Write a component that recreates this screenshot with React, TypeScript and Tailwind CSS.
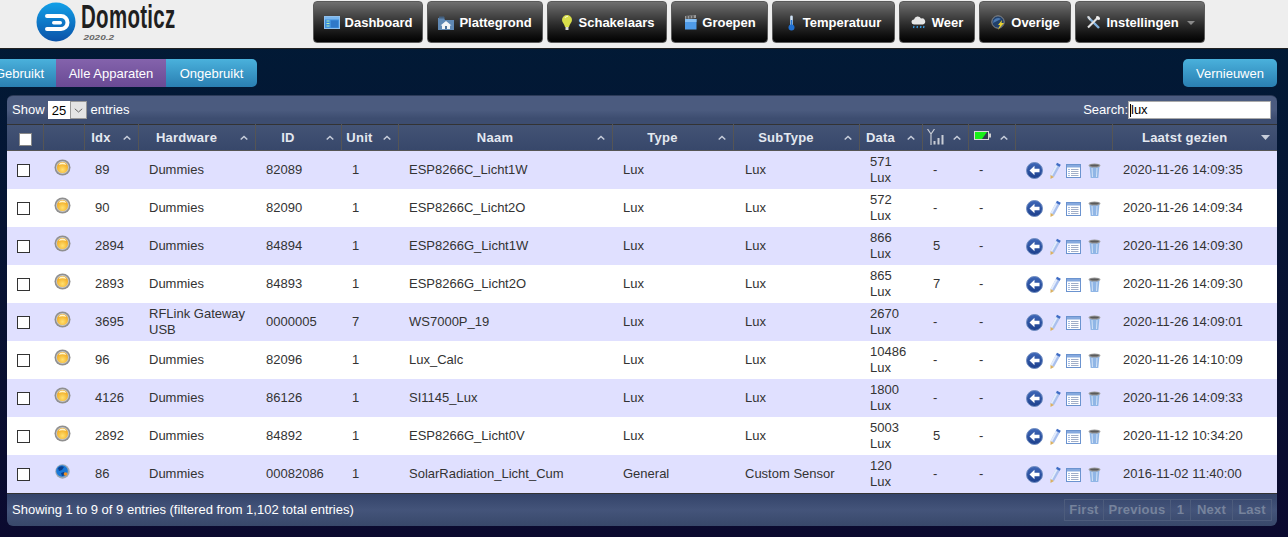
const font = "font-['Liberation_Sans',Arial,sans-serif]";

const rows = [
  { idx: '89', hw: 'Dummies', id: '82089', unit: '1', name: 'ESP8266C_Licht1W', type: 'Lux', sub: 'Lux', data: '571', signal: '-', seen: '2020-11-26 14:09:35' },
  { idx: '90', hw: 'Dummies', id: '82090', unit: '1', name: 'ESP8266C_Licht2O', type: 'Lux', sub: 'Lux', data: '572', signal: '-', seen: '2020-11-26 14:09:34' },
  { idx: '2894', hw: 'Dummies', id: '84894', unit: '1', name: 'ESP8266G_Licht1W', type: 'Lux', sub: 'Lux', data: '866', signal: '5', seen: '2020-11-26 14:09:30' },
  { idx: '2893', hw: 'Dummies', id: '84893', unit: '1', name: 'ESP8266G_Licht2O', type: 'Lux', sub: 'Lux', data: '865', signal: '7', seen: '2020-11-26 14:09:30' },
  { idx: '3695', hw: 'RFLink Gateway USB', id: '0000005', unit: '7', name: 'WS7000P_19', type: 'Lux', sub: 'Lux', data: '2670', signal: '-', seen: '2020-11-26 14:09:01' },
  { idx: '96', hw: 'Dummies', id: '82096', unit: '1', name: 'Lux_Calc', type: 'Lux', sub: 'Lux', data: '10486', signal: '-', seen: '2020-11-26 14:10:09' },
  { idx: '4126', hw: 'Dummies', id: '86126', unit: '1', name: 'SI1145_Lux', type: 'Lux', sub: 'Lux', data: '1800', signal: '-', seen: '2020-11-26 14:09:33' },
  { idx: '2892', hw: 'Dummies', id: '84892', unit: '1', name: 'ESP8266G_Licht0V', type: 'Lux', sub: 'Lux', data: '5003', signal: '5', seen: '2020-11-12 10:34:20' },
  { idx: '86', hw: 'Dummies', id: '00082086', unit: '1', name: 'SolarRadiation_Licht_Cum', type: 'General', sub: 'Custom Sensor', data: '120', signal: '-', seen: '2016-11-02 11:40:00', globe: true },
];

const DashboardIcon = () => (
  <svg width="16" height="13" viewBox="0 0 16 13">
    <rect x="0.500" y="0.500" width="15" height="12" fill="#3f8fdc" stroke="#8fc0ee" />
    <rect x="1" y="1" width="14" height="2.500" fill="#79b6ee" />
    <path d="M2.500 5h3M2.500 7.500h3M2.500 10h3" stroke="#b8f0b0" strokeWidth="1.200" />
    <rect x="7" y="4.500" width="7" height="7" fill="#2f78c8" />
  </svg>
);

const PlanIcon = () => (
  <svg width="16" height="14" viewBox="0 0 16 14">
    <path d="M0 2h6l1 2h9v10H0z" fill="#5f88b4" />
    <path d="M1 0.500h5l1 2H1z" fill="#44607f" />
    <path d="M8 5l5.500 4.500H12V13H4V9.500H2.500z" fill="#f2f4f7" />
    <rect x="7" y="10" width="2" height="3" fill="#4c6f96" />
  </svg>
);

const BulbIcon = () => (
  <svg width="12" height="16" viewBox="0 0 12 16">
    <path d="M6 0a5 5 0 0 1 5 5c0 2.500-2.500 4-3 7H4c-.5-3-3-4.500-3-7a5 5 0 0 1 5-5z" fill="#d8de4a" />
    <path d="M4 3a3 3 0 0 1 3-1.500" stroke="#f6f8c0" strokeWidth="1.200" fill="none" />
    <rect x="4.500" y="12" width="3" height="3" fill="#d9d9d9" />
  </svg>
);

const ClapperIcon = () => (
  <svg width="13" height="15" viewBox="0 0 13 15">
    <path d="M1 1l11-1v3l-11 1z" fill="#9a9a9a" />
    <path d="M3 1v3M6 1v2.500M9 .5v3" stroke="#333" strokeWidth="1" />
    <rect x="1" y="4" width="11.500" height="10.500" fill="#4f9be8" />
    <rect x="1" y="4" width="11.500" height="3" fill="#88c0f4" />
  </svg>
);

const ThermoIcon = () => (
  <svg width="9" height="16" viewBox="0 0 9 16">
    <rect x="3.200" y="0.500" width="2.600" height="11" rx="1.300" fill="#cfe2f5" />
    <rect x="3.700" y="5" width="1.600" height="7" fill="#2478d8" />
    <circle cx="4.500" cy="12.500" r="3" fill="#1f6fd0" />
  </svg>
);

const CloudIcon = () => (
  <svg width="15" height="15" viewBox="0 0 15 15">
    <path d="M3 9.500a2.500 2.500 0 0 1 0-5 3.800 3.800 0 0 1 7-1 3 3 0 0 1 2 6z" fill="#e6e6e6" />
    <path d="M3 11l-.5 2M6.500 11l-.5 2M10 11l-.5 2M13 11l-.5 2" stroke="#3aa0e8" strokeWidth="1.300" />
  </svg>
);

const GaugeIcon = () => (
  <svg width="15" height="15" viewBox="0 0 15 15">
    <circle cx="7" cy="7" r="6.200" fill="#21406a" stroke="#8a8a8a" />
    <path d="M2 8a5 5 0 0 1 8-4z" fill="#4a78b0" />
    <path d="M11 5L7 10l2 0-2 5 6-7h-2.500z" fill="#e8d030" />
  </svg>
);

const ToolsIcon = () => (
  <svg width="15" height="15" viewBox="0 0 15 15">
    <path d="M2 2l11 11" stroke="#7fb0de" strokeWidth="2.400" />
    <path d="M1 1.500L3 1l2 3-1.500 1.500z" fill="#d8d8d8" />
    <path d="M12 2.500L2 12.500" stroke="#e2e2e2" strokeWidth="2.200" />
    <path d="M10.500 1a3 3 0 0 1 3.500 3.500l-2 .5-2-2z" fill="#f0f0f0" />
  </svg>
);

const navItems = [
  { label: 'Dashboard', icon: <DashboardIcon />, w: 'w-[110px]', iw: 'w-4' },
  { label: 'Plattegrond', icon: <PlanIcon />, w: 'w-[116px]', iw: 'w-4' },
  { label: 'Schakelaars', icon: <BulbIcon />, w: 'w-[120px]', iw: 'w-[14px]' },
  { label: 'Groepen', icon: <ClapperIcon />, w: 'w-[97px]', iw: 'w-[14px]' },
  { label: 'Temperatuur', icon: <ThermoIcon />, w: 'w-[123px]', iw: 'w-3' },
  { label: 'Weer', icon: <CloudIcon />, w: 'w-[76px]', iw: 'w-4' },
  { label: 'Overige', icon: <GaugeIcon />, w: 'w-[92px]', iw: 'w-4' },
  { label: 'Instellingen', icon: <ToolsIcon />, w: 'w-[130px]', iw: 'w-4', caret: true },
];

const Logo = () => (
  <svg width="40" height="40" viewBox="0 0 40 40">
    <defs>
      <linearGradient id="logoFill" x1="0" y1="0" x2="0" y2="1">
        <stop offset="0" stopColor="#12a0e8" />
        <stop offset="1" stopColor="#0a52a8" />
      </linearGradient>
    </defs>
    <circle cx="20" cy="20" r="19.500" fill="url(#logoFill)" />
    <path d="M11 12h14a8.500 8.500 0 0 1 0 17H11a2 2 0 0 1 0-4h14a4.500 4.500 0 0 0 0-9H11a2 2 0 0 1 0-4z" fill="#fff" />
    <rect x="16" y="19" width="10" height="3.500" rx="1.700" fill="#fff" />
  </svg>
);

const SortArrow = ({ down }: { down?: boolean }) => (
  <span className="absolute right-[7px] top-[10px] flex">
    {down ? (
      <svg width="9" height="6" viewBox="0 0 9 6"><path d="M0 0h9L4.500 5z" fill="#c8cedb" /></svg>
    ) : (
      <svg width="8" height="6" viewBox="0 0 8 6"><path d="M.7 4.500L4 1.500l3.300 3" fill="none" stroke="#c8cedb" strokeWidth="1.500" /></svg>
    )}
  </span>
);

const SignalIcon = () => (
  <svg width="17" height="16" viewBox="0 0 17 16">
    <path d="M4 4v12M0.500 0l3.500 5L7.500 0" fill="none" stroke="#c9cdd6" strokeWidth="1.200" />
    <rect x="6.500" y="12" width="2" height="3.500" fill="#c9cdd6" />
    <rect x="10.500" y="9" width="2" height="6.500" fill="#c9cdd6" />
    <rect x="14.500" y="6" width="2" height="9.500" fill="#c9cdd6" />
  </svg>
);

const BatteryIcon = () => (
  <svg width="17" height="9" viewBox="0 0 17 9">
    <rect x="0.500" y="0.500" width="14" height="8" fill="#30394f" stroke="#d8d8d8" />
    <path d="M1 1h12L8 8H1z" fill="#18f018" />
    <rect x="15" y="2.500" width="2" height="4" fill="#d0d0d0" />
  </svg>
);

const LuxIcon = () => (
  <svg width="17" height="17" viewBox="0 0 17 17">
    <defs>
      <radialGradient id="luxFill" cx="0.5" cy="0.7" r="0.6">
        <stop offset="0" stopColor="#ffe070" />
        <stop offset="1" stopColor="#f2aa20" />
      </radialGradient>
    </defs>
    <circle cx="8.500" cy="8.500" r="8" fill="#8f8f8f" />
    <circle cx="8.500" cy="8.500" r="6.500" fill="#c8c8c8" />
    <circle cx="8.500" cy="8.500" r="5.500" fill="url(#luxFill)" />
    <path d="M4.500 6a4.500 4.500 0 0 1 8 0q-4-1.500-8 0z" fill="#fff6d0" />
  </svg>
);

const GlobeIcon = () => (
  <svg width="15" height="15" viewBox="0 0 15 15">
    <circle cx="7.500" cy="7.500" r="7.200" fill="#9aa6b2" />
    <circle cx="7" cy="7" r="5.800" fill="#1878d8" />
    <path d="M3 4q3-3 6-1l-2 3-3 1zM6 9l3-1 1 3-3 1z" fill="#0b3f8c" />
    <circle cx="10.500" cy="10" r="1.800" fill="#f09020" />
  </svg>
);

const BackIcon = () => (
  <svg width="17" height="17" viewBox="0 0 17 17">
    <defs>
      <linearGradient id="backFill" x1="0" y1="0" x2="0" y2="1">
        <stop offset="0" stopColor="#3f68b8" />
        <stop offset="1" stopColor="#1c3f8c" />
      </linearGradient>
    </defs>
    <circle cx="8.500" cy="8.500" r="8" fill="url(#backFill)" stroke="#6f8cc0" />
    <path d="M3.500 8.500L8.500 3.800v2.900H13.500v3.600H8.500v2.900z" fill="#fff" />
  </svg>
);

const PencilIcon = () => (
  <svg width="12" height="17" viewBox="0 0 12 17">
    <path d="M7.500 1.500l4 2L5 15l-3.500-2z" fill="#a9c0ee" />
    <path d="M7.500 1.500l1.800.9L3 14l-1.500-1z" fill="#e4ecfb" />
    <path d="M8 .800l3.800 2-1.200 2L7 3z" fill="#3f6cc4" />
    <path d="M1.500 13L5 15l-3.500 2z" fill="#d9b060" />
  </svg>
);

const ListIcon = () => (
  <svg width="15" height="14" viewBox="0 0 15 14">
    <rect x="0.500" y="0.500" width="14" height="13" fill="#fff" stroke="#6b93cf" />
    <rect x="1" y="1" width="13" height="2.500" fill="#86a9de" />
    <path d="M2.500 5.500h1M2.500 7.500h1M2.500 9.500h1M2.500 11.500h1" stroke="#4a7ac4" />
    <path d="M5 5.500h7.500M5 7.500h7.500M5 9.500h7.500M5 11.500h7.500" stroke="#a0aec8" />
  </svg>
);

const TrashIcon = () => (
  <svg width="13" height="16" viewBox="0 0 13 16">
    <path d="M1.500 3h10l-1.200 12H2.700z" fill="#90b6e6" />
    <path d="M4 5l.5 9M9 5l-.5 9" stroke="#d2e2f6" />
    <ellipse cx="6.500" cy="2.500" rx="6" ry="2" fill="#9a9a9a" />
    <ellipse cx="6.500" cy="2.500" rx="4.300" ry="1" fill="#5a5a5a" />
  </svg>
);

const headers = [
  { label: 'Idx' },
  { label: 'Hardware' },
  { label: 'ID' },
  { label: 'Unit' },
  { label: 'Naam' },
  { label: 'Type' },
  { label: 'SubType' },
  { label: 'Data' },
];

const NavButton = ({ item }: { item: (typeof navItems)[number] }) => (
  <button className={`${item.w} h-[42px] flex items-center justify-center gap-[5px] rounded-[4px] border border-[#5a5a5a] bg-linear-to-b from-[#707070] to-[#030303] pt-px text-[13px] font-bold text-white`}>
    <span className={`flex ${item.iw} justify-center`}>{item.icon}</span>
    <span>{item.label}</span>
    {item.caret && <span className="ml-[3px] mt-px h-0 w-0 border-x-4 border-t-4 border-x-transparent border-t-[#8a8a8a]" />}
  </button>
);

export default function App() {
  return (
    <div className={`${font} flex h-[537px] w-[1288px] flex-col overflow-hidden bg-linear-to-b from-[#001b36] to-[#0b0a2f] text-[13px]`}>
      <header className="flex h-[49px] shrink-0 border-b border-[#222] bg-[#eeeeee]">
        <div className="flex w-[313px] shrink-0 pl-[36px] pt-[2px]">
          <Logo />
          <div className="ml-[5px] w-[180px]">
            <div className="h-[31px] w-[170px] origin-left scale-x-[0.62] whitespace-nowrap text-[33px] font-bold leading-[30px] tracking-[0.5px] text-[#1f1f1f]">Domoticz</div>
            <div className="origin-left scale-x-[1.25] pl-[2px] text-[8px] font-bold italic leading-[9px] text-[#666]">2020.2</div>
          </div>
        </div>
        <nav className="flex gap-1 pt-px">
          {navItems.map(item => <NavButton key={item.label} item={item} />)}
        </nav>
      </header>

      <div className="mt-[10px] flex h-[28px] shrink-0 justify-between pr-[11px] text-white">
        <div className="flex">
          <button className="-ml-[17px] h-[28px] w-[73px] rounded-l-[5px] bg-linear-to-b from-[#4ab1dc] to-[#2a7fb2] pt-px">Gebruikt</button>
          <button className="h-[28px] w-[110px] bg-linear-to-b from-[#8463ac] to-[#6a4a94] pt-px">Alle Apparaten</button>
          <button className="h-[28px] w-[91px] rounded-r-[5px] bg-linear-to-b from-[#4ab1dc] to-[#2a7fb2] pt-px">Ongebruikt</button>
        </div>
        <button className="h-[28px] w-[94px] rounded-[5px] bg-linear-to-b from-[#4ab1dc] to-[#2a7fb2] pt-px">Vernieuwen</button>
      </div>

      <main className="ml-[7px] mt-[8px] w-[1270px]">
        <div className="flex h-[29px] items-center justify-between rounded-t-[6px] border-t border-[#2c3a58] bg-linear-to-b from-[#4b5b7f] from-50% to-[#3d4d70] to-80% pl-[5px] pr-[6px] text-white">
          <div className="flex items-center">
            <span>Show</span>
            <span className="ml-[3px] flex h-[18px] w-[39px] bg-white text-black">
              <span className="w-[22px] pl-[1px] text-center leading-[19px]">25</span>
              <span className="flex w-[17px] items-center justify-center border border-[#999] bg-[#e4e4e4]">
                <svg width="9" height="5" viewBox="0 0 9 5"><path d="M.8.800L4.500 4 8.200.8" fill="none" stroke="#666" /></svg>
              </span>
            </span>
            <span className="ml-1">entries</span>
          </div>
          <div className="flex items-center">
            <span>Search:</span>
            <span className="relative flex">
              <input readOnly value="lux" className="h-[18px] w-[143px] border border-[#aaa] bg-white pl-[2px] text-[13px] text-black outline-none" />
              <span className="absolute left-[2px] top-[3px] h-[13px] w-px bg-black" />
            </span>
          </div>
        </div>

        <table className="w-[1270px] table-fixed border-collapse text-[13px] text-[#333]">
          <colgroup>
            <col className="w-[36px]" />
            <col className="w-[41px]" />
            <col className="w-[54px]" />
            <col className="w-[117px]" />
            <col className="w-[86px]" />
            <col className="w-[57px]" />
            <col className="w-[214px]" />
            <col className="w-[121px]" />
            <col className="w-[126px]" />
            <col className="w-[63px]" />
            <col className="w-[46px]" />
            <col className="w-[47px]" />
            <col className="w-[97px]" />
            <col className="w-[165px]" />
          </colgroup>
          <thead>
            <tr className="h-[26px] bg-linear-to-b from-[#435375] to-[#37476a] font-bold tracking-[0.25px] text-[#e4e8f0]">
              <th className="border border-l-0 border-t-[#333] border-b-[#555] border-r-[#555] p-0">
                <input type="checkbox" readOnly className="mt-[3px] ml-[2px] block h-[13px] w-[13px] translate-x-[10px] appearance-none border border-[#888] bg-white" />
              </th>
              <th className="border border-t-[#333] border-b-[#555] border-x-[#555]" />
              {headers.map(h => (
                <th key={h.label} className="relative border border-t-[#333] border-b-[#555] border-x-[#555] p-0 pr-5 text-center">
                  {h.label}
                  <SortArrow />
                </th>
              ))}
              <th className="relative border border-t-[#333] border-b-[#555] border-x-[#555] p-0 pr-5">
                <span className="flex pb-[2px] pl-[4px]"><SignalIcon /></span>
                <SortArrow />
              </th>
              <th className="relative border border-t-[#333] border-b-[#555] border-x-[#555] p-0 pr-5">
                <span className="flex pb-[4px] pl-[5px]"><BatteryIcon /></span>
                <SortArrow />
              </th>
              <th className="border border-t-[#333] border-b-[#555] border-x-[#555]" />
              <th className="relative border border-r-0 border-t-[#333] border-b-[#555] border-l-[#555] p-0 pr-5 text-center">
                Laatst gezien
                <SortArrow down />
              </th>
            </tr>
          </thead>
          <tbody>
            {rows.map((r, i) => (
              <tr key={r.idx} className={`h-[38px] leading-[16px] ${i % 2 === 0 ? 'bg-[#e0e0ff]' : 'bg-white'}`}>
                <td className="p-0 pl-[10px]">
                  <input type="checkbox" readOnly className="block h-[13px] w-[13px] translate-y-px appearance-none border border-[#333] bg-white" />
                </td>
                <td className="p-0 pl-[11px]">
                  <span className="block -translate-y-0.5">{r.globe ? <span className="ml-px block"><GlobeIcon /></span> : <LuxIcon />}</span>
                </td>
                <td className="px-[11px]">{r.idx}</td>
                <td className="pl-[11px] pr-[4px]">{r.hw}</td>
                <td className="px-[11px]">{r.id}</td>
                <td className="px-[11px]">{r.unit}</td>
                <td className="px-[11px]">{r.name}</td>
                <td className="px-[11px]">{r.type}</td>
                <td className="px-[12px]">{r.sub}</td>
                <td className="px-[11px]">{r.data}<br />Lux</td>
                <td className="px-[11px]">{r.signal}</td>
                <td className="px-[11px]">-</td>
                <td className="p-0 pl-[11px]">
                  <div className="flex translate-y-px items-center">
                    <BackIcon />
                    <span className="ml-[6px] flex"><PencilIcon /></span>
                    <span className="ml-[5px] flex"><ListIcon /></span>
                    <span className="ml-[7px] flex"><TrashIcon /></span>
                  </div>
                </td>
                <td className="px-[11px]">{r.seen}</td>
              </tr>
            ))}
          </tbody>
        </table>

        <div className="flex h-[33px] items-center justify-between rounded-b-[6px] border-t border-[#333] bg-linear-to-b from-[#34446a] via-[#44547a] to-[#38486a] pl-[5px] pr-[5px] text-white">
          <span>Showing 1 to 9 of 9 entries (filtered from 1,102 total entries)</span>
          <div className="flex h-[22px] border border-[#4d5c7c] font-bold tracking-[0.25px] text-[#76839c]">
            <span className="flex w-[39px] items-center justify-center border-r border-[#4d5c7c]">First</span>
            <span className="flex w-[67px] items-center justify-center border-r border-[#4d5c7c]">Previous</span>
            <span className="flex w-[20px] items-center justify-center border-r border-[#4d5c7c]">1</span>
            <span className="flex w-[42px] items-center justify-center border-r border-[#4d5c7c]">Next</span>
            <span className="flex w-[38px] items-center justify-center">Last</span>
          </div>
        </div>
      </main>
    </div>
  );
}
